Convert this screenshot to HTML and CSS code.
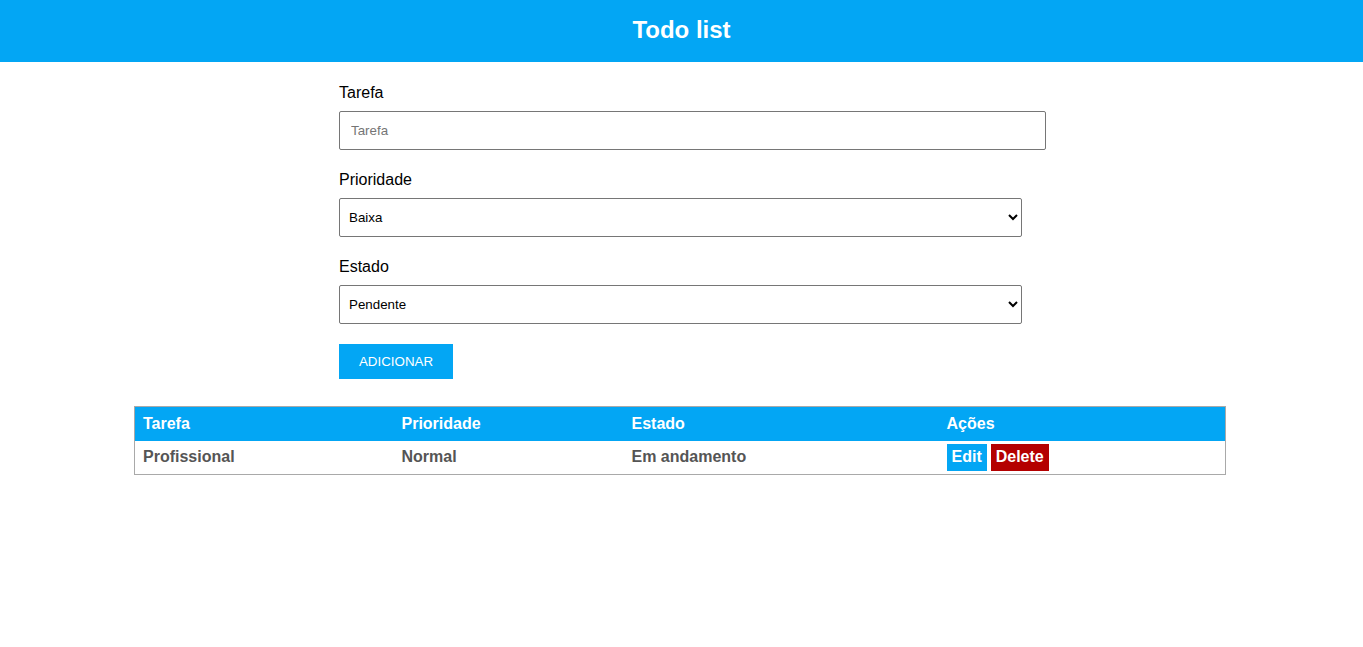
FILE: index.html
```html
<!DOCTYPE html>
<html lang="pt">
<head>
<meta charset="utf-8">
<title>Todo list</title>
<link rel="stylesheet" href="styles.css">
</head>
<body>
<header class="topbar">
  <h1 class="title">Todo list</h1>
</header>
<main class="page">
  <form class="form">
    <div class="field">
      <label class="label" for="tarefa">Tarefa</label>
      <input class="input" id="tarefa" type="text" placeholder="Tarefa">
    </div>
    <div class="field">
      <label class="label" for="prioridade">Prioridade</label>
      <select class="select" id="prioridade">
        <option>Baixa</option>
        <option>Normal</option>
        <option>Alta</option>
      </select>
    </div>
    <div class="field">
      <label class="label" for="estado">Estado</label>
      <select class="select" id="estado">
        <option>Pendente</option>
        <option>Em andamento</option>
        <option>Concluída</option>
      </select>
    </div>
    <button class="add" type="button">ADICIONAR</button>
  </form>
  <table class="table">
    <thead>
      <tr>
        <th class="c1">Tarefa</th>
        <th class="c2">Prioridade</th>
        <th class="c3">Estado</th>
        <th class="c4">Ações</th>
      </tr>
    </thead>
    <tbody>
      <tr>
        <td>Profissional</td>
        <td>Normal</td>
        <td>Em andamento</td>
        <td>
          <div class="actions">
            <button class="btn edit" type="button">Edit</button>
            <button class="btn delete" type="button">Delete</button>
          </div>
        </td>
      </tr>
    </tbody>
  </table>
</main>
</body>
</html>
```
FILE: styles.css
```css
* { box-sizing: border-box; }
html, body { margin: 0; padding: 0; background: #fff; }
body { font-family: "Liberation Sans", Arial, sans-serif; color: #000; }

.topbar {
  height: 62px;
  background: #03a6f4;
  padding-top: 16px;
  text-align: center;
}
.title {
  margin: 0;
  font-size: 24px;
  font-weight: bold;
  color: #fff;
  line-height: normal;
}

.page {
  display: flex;
  flex-direction: column;
  align-items: center;
  padding-top: 22px;
}

.form {
  width: 685px;
  display: flex;
  flex-direction: column;
  align-items: flex-start;
}
.field {
  display: flex;
  flex-direction: column;
  margin-bottom: 21px;
}
.field:nth-child(3) { margin-bottom: 20px; }
.label {
  font-size: 16px;
  line-height: normal;
  margin-bottom: 9px;
  height: 18px;
}
.input {
  width: 707px;
  height: 39px;
  border: 1px solid #767676;
  border-radius: 2px;
  padding: 0 11px;
  font-family: "Liberation Sans", Arial, sans-serif;
  font-size: 13.333px;
  color: #000;
}
.input::placeholder { color: #757575; }
.select {
  width: 683px;
  height: 39px;
  border: 1px solid #767676;
  border-radius: 2px;
  padding: 0 5px;
  font-family: "Liberation Sans", Arial, sans-serif;
  font-size: 13.333px;
  color: #000;
  background: #fff;
}
.add {
  height: 35px;
  width: 114px;
  padding: 0;
  border: none;
  background: #03a6f4;
  color: #fff;
  font-family: "Liberation Sans", Arial, sans-serif;
  font-size: 13.333px;
}

.table {
  margin-top: 27px;
  width: 1092px;
  border-collapse: collapse;
  border: 1px solid #a9a9a9;
  margin-left: -3px;
  table-layout: fixed;
}
.table th {
  background: #03a6f4;
  color: #fff;
  text-align: left;
  font-size: 16px;
  font-weight: bold;
  height: 34px;
  padding: 0 8px;
}
.table td {
  font-size: 16px;
  font-weight: bold;
  color: #555;
  height: 34px;
  padding: 0 8px;
  vertical-align: middle;
}
.c1 { width: 259px; }
.c2 { width: 230px; }
.c3 { width: 315px; }
.c4 { width: auto; }

.actions { display: flex; gap: 4px; }
.btn {
  height: 27px;
  padding: 0 5px;
  border: none;
  color: #fff;
  font-family: "Liberation Sans", Arial, sans-serif;
  font-size: 16px;
  font-weight: bold;
}
.edit { background: #03a6f4; }
.delete { background: #b40000; }
```
